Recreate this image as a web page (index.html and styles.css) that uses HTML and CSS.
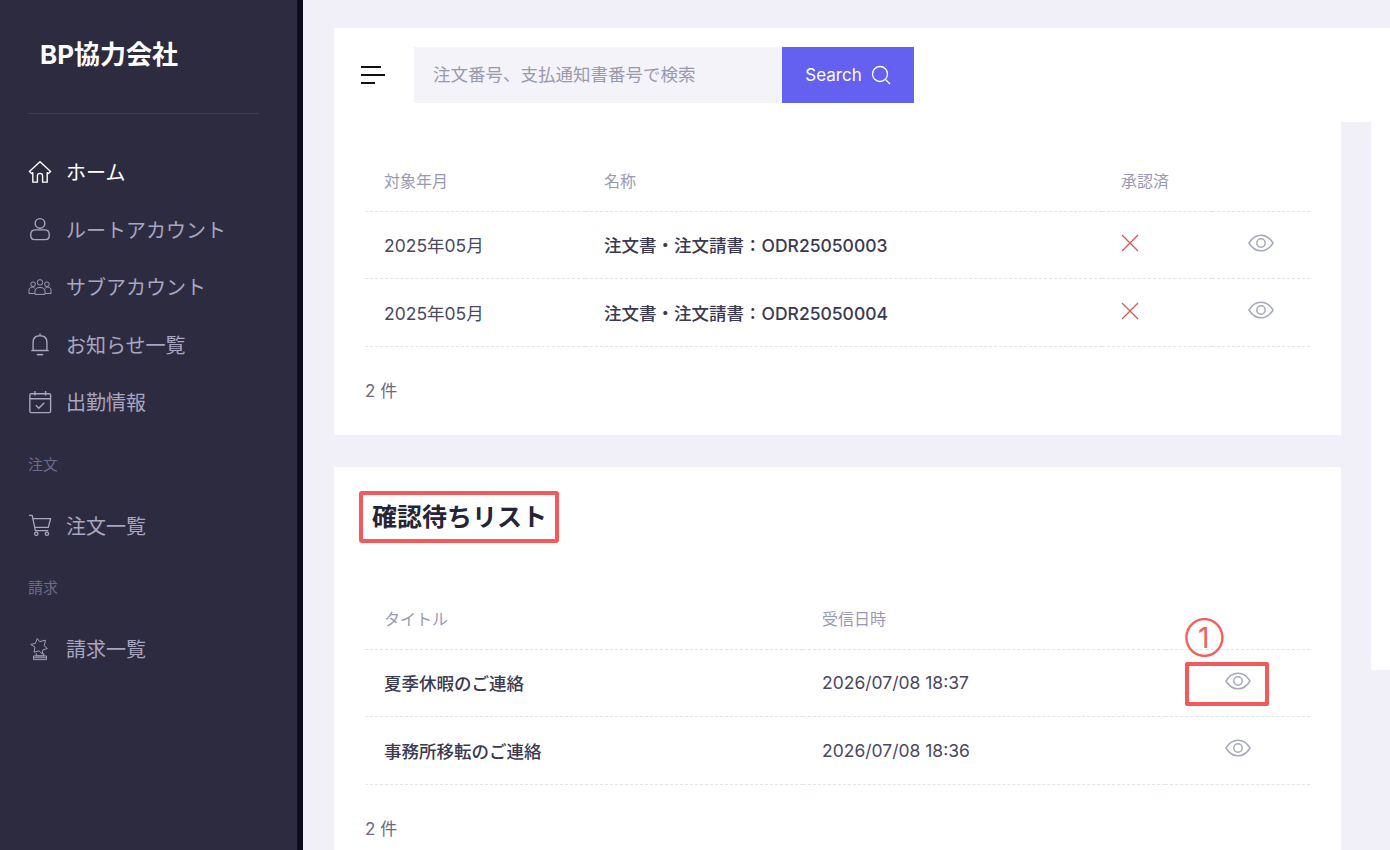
FILE: index.html
```html
<!DOCTYPE html>
<html lang="ja">
<head>
    <meta charset="UTF-8">
    <title>BP協力会社</title>
    <link rel="stylesheet" href="styles.css">
</head>
<body>
<svg class="defs" width="0" height="0">
    <symbol id="i-eye" viewBox="0 0 26 18">
        <path d="M1 9C4 4 8 1.2 13 1.2S22 4 25 9c-3 5-7 7.800-12 7.800S4 14 1 9z" fill="none" stroke="currentColor" stroke-width="1.500"/>
        <circle cx="13" cy="9" r="4.200" fill="none" stroke="currentColor" stroke-width="1.500"/>
    </symbol>
    <symbol id="i-x" viewBox="0 0 18 18">
        <path d="M1 1l16 16M17 1L1 17" fill="none" stroke="currentColor" stroke-width="1.200"/>
    </symbol>
</svg>

<aside class="sidebar">
    <div class="logo">BP協力会社</div>
    <nav class="nav">
        <a class="nav-item active">
            <svg class="nav-icon" viewBox="0 0 26 26"><path d="M1.500 12.500L13 2l11.500 10.500-2.500 2.200-1.200-1V24h-5v-7q0-2.500-2.800-2.500T10.200 17v7h-5V13.700l-1.200 1z" fill="none" stroke="currentColor" stroke-width="1.500" stroke-linejoin="round"/></svg>
            ホーム
        </a>
        <a class="nav-item">
            <svg class="nav-icon" viewBox="0 0 26 26"><circle cx="13" cy="7" r="5.200" fill="none" stroke="currentColor" stroke-width="1.500"/><path d="M8 14h10q5 0 5 5v1q0 4.500-4.500 4.500h-11Q3 24.500 3 20v-1q0-5 5-5z" fill="none" stroke="currentColor" stroke-width="1.500"/></svg>
            ルートアカウント
        </a>
        <a class="nav-item">
            <svg class="nav-icon" viewBox="0 0 26 26" fill="none" stroke="currentColor" stroke-width="1"><circle cx="13" cy="8" r="3"/><circle cx="5.500" cy="10" r="2.500"/><circle cx="20.500" cy="10" r="2.500"/><path d="M7.500 21v-2.500q0-5 5.500-5t5.500 5V21z"/><path d="M7.500 14.500q-1.500-1.500-3-1.500Q1 13 1 17.500V20h6.500M18.500 14.500q1.500-1.500 3-1.500 3.500 0 3.500 4.500V20h-6.500"/></svg>
            サブアカウント
        </a>
        <a class="nav-item">
            <svg class="nav-icon" viewBox="0 0 26 26" fill="none" stroke="currentColor" stroke-width="1.500"><path d="M13 1.500v2.300M5.500 20v-9q0-7 7.500-7t7.500 7v9zM3.500 20.200h19"/><path d="M9.500 24.500h7" stroke-width="1.800"/></svg>
            お知らせ一覧
        </a>
        <a class="nav-item">
            <svg class="nav-icon" viewBox="0 0 26 26" fill="none" stroke="currentColor" stroke-width="1.500"><rect x="2" y="4" width="22.500" height="20.500" rx="1.500"/><path d="M2 9.500h22.500M7.500 1v5M19 1v5"/><path d="M8.500 16.500l3.200 3.200 6-6"/></svg>
            出勤情報
        </a>
        <div class="nav-label">注文</div>
        <a class="nav-item">
            <svg class="nav-icon" viewBox="0 0 26 26" fill="none" stroke="currentColor" stroke-width="1.400"><path d="M1 2.500h3.500L8 19h14"/><path d="M5.300 6h19.200l-2.500 9.500H7.300"/><circle cx="9" cy="22.500" r="1.800"/><circle cx="20.500" cy="22.500" r="1.800"/></svg>
            注文一覧
        </a>
        <div class="nav-label">請求</div>
        <a class="nav-item">
            <svg class="nav-icon" viewBox="0 0 26 26" fill="none" stroke="currentColor" stroke-width="1"><path d="M10 1.500l2.500 3.500 6.500-1.500-1.500 6 3.500 3-5 1.500-.5 4.500-3.500-3.500-5.500 1.500 1-5.500L3 8l5-1z"/><path d="M8 20.500h10M9 20.500v-3M17 20.500v-3M6 24.500h14v-4H6zM6 22.500h14"/></svg>
            請求一覧
        </a>
    </nav>
</aside>

<div class="main">
    <header class="topbar">
        <div class="burger"><span class="b1"></span><span class="b2"></span><span class="b3"></span></div>
        <div class="search">
            <div class="search-input">注文番号、支払通知書番号で検索</div>
            <div class="search-btn">Search
                <svg class="search-icon" viewBox="0 0 20 20" fill="none" stroke="currentColor" stroke-width="1.300"><circle cx="9" cy="9" r="7.500"/><path d="M14.500 14.500l4.500 4.500"/></svg>
            </div>
        </div>
    </header>

    <div class="content">
        <div class="cards">
            <section class="card card-first">
                <table class="list list-orders">
                    <thead>
                        <tr><th class="c-month">対象年月</th><th class="c-name">名称</th><th class="c-ok">承認済</th><th></th></tr>
                    </thead>
                    <tbody>
                        <tr>
                            <td>2025年05月</td>
                            <td class="strong">注文書・注文請書：ODR25050003</td>
                            <td><svg class="ico-x"><use href="#i-x"/></svg></td>
                            <td class="eye-cell"><svg class="ico-eye"><use href="#i-eye"/></svg></td>
                        </tr>
                        <tr>
                            <td>2025年05月</td>
                            <td class="strong">注文書・注文請書：ODR25050004</td>
                            <td><svg class="ico-x"><use href="#i-x"/></svg></td>
                            <td class="eye-cell"><svg class="ico-eye"><use href="#i-eye"/></svg></td>
                        </tr>
                    </tbody>
                </table>
                <p class="count">2 件</p>
            </section>

            <section class="card card-second">
                <h2 class="card-title">確認待ちリスト</h2>
                <table class="list list-notice">
                    <thead>
                        <tr><th class="c-title">タイトル</th><th class="c-date">受信日時</th><th></th></tr>
                    </thead>
                    <tbody>
                        <tr>
                            <td class="strong">夏季休暇のご連絡</td>
                            <td>2026/07/08 18:37</td>
                            <td class="eye-cell marked">
                                <svg class="ico-eye"><use href="#i-eye"/></svg>
                                <span class="mark-box"></span>
                                <span class="mark-num">①</span>
                            </td>
                        </tr>
                        <tr>
                            <td class="strong">事務所移転のご連絡</td>
                            <td>2026/07/08 18:36</td>
                            <td class="eye-cell"><svg class="ico-eye"><use href="#i-eye"/></svg></td>
                        </tr>
                    </tbody>
                </table>
                <p class="count">2 件</p>
            </section>
        </div>
        <div class="side-panel"></div>
    </div>
</div>
</body>
</html>
```

FILE: styles.css
```css
* {
    box-sizing: border-box;
}

html, body {
    height: 850px;
    margin: 0;
    overflow: hidden;
}

body {
    display: flex;
    background-color: #f1f0f9;
    font-family: "Inter", "Noto Sans CJK JP", sans-serif;
    color: #3b3950;
}

.defs {
    position: absolute;
}

/* sidebar */
.sidebar {
    width: 303px;
    flex: none;
    height: 850px;
    background-color: #2d2b3f;
    border-right: 6px solid #0d0b1e;
    padding: 0 38px 0 28px;
}

.logo {
    height: 114px;
    padding: 37px 0 0 12px;
    border-bottom: 1px solid #3f3d52;
    font-size: 26px;
    line-height: 36px;
    font-weight: 700;
    color: #fff;
}

.nav {
    padding-top: 29px;
}

.nav-item {
    display: flex;
    align-items: center;
    gap: 14px;
    height: 57.5px;
    font-size: 20px;
    color: #a8a6c0;
}

.nav-item.active {
    color: #fff;
}

.nav-icon {
    width: 24px;
    height: 24px;
    flex: none;
}

.nav-label {
    height: 66px;
    padding-top: 23px;
    font-size: 15px;
    line-height: 22px;
    color: #6c6a8e;
}

/* top bar */
.main {
    flex: 1;
    min-width: 0;
    padding: 28px 0 0 31px;
}

.topbar {
    display: flex;
    align-items: flex-start;
    height: 94px;
    padding: 19px 0 0 27px;
    background-color: #fff;
}

.burger {
    display: flex;
    flex-direction: column;
    gap: 6px;
    width: 25px;
    margin: 19px 28px 0 0;
}

.burger span {
    display: block;
    height: 2px;
    background-color: #111;
}

.b1 {
    width: 20px;
}

.b2 {
    width: 24px;
}

.b3 {
    width: 14px;
}

.search {
    display: flex;
    height: 56px;
}

.search-input {
    width: 368px;
    padding-left: 19px;
    background-color: #f3f3f9;
    font-size: 17.5px;
    line-height: 56px;
    color: #9a99ab;
}

.search-btn {
    display: flex;
    align-items: center;
    justify-content: center;
    gap: 9px;
    width: 132px;
    background-color: #6460f0;
    color: #fff;
    font-size: 17px;
}

.search-icon {
    width: 20px;
    height: 20px;
}

/* cards */
.content {
    display: flex;
    gap: 30px;
    align-items: flex-start;
}

.cards {
    width: 1007px;
    flex: none;
}

.side-panel {
    flex: 1;
    height: 548px;
    background-color: #fff;
}

.card {
    padding: 0 31px;
    background-color: #fff;
}

.card-first {
    height: 313px;
    padding-top: 27px;
    margin-bottom: 32px;
}

.card-second {
    height: 420px;
    padding-top: 24px;
}

.card-title {
    display: inline-block;
    margin: 0 0 44px -6px;
    padding: 0 8px 0 9px;
    height: 52px;
    border: 4px solid #f55a5a;
    border-radius: 3px;
    font-size: 25px;
    line-height: 44px;
    font-weight: 700;
    color: #262538;
}

.list {
    width: 945px;
    border-collapse: collapse;
    table-layout: fixed;
}

.list th {
    height: 62px;
    padding: 0 0 0 19px;
    text-align: left;
    font-size: 16px;
    font-weight: 400;
    color: #9a99b3;
    border-bottom: 1px dashed #dfe6e6;
}

.list td {
    height: 67.5px;
    padding: 0 0 0 19px;
    font-size: 17.5px;
    color: #4a4860;
    border-bottom: 1px dashed #dfe6e6;
}

.list td.strong {
    font-weight: 500;
    color: #3b3950;
}

.c-month {
    width: 220px;
}

.c-name {
    width: 517px;
}

.c-ok {
    width: 110px;
}

.c-title {
    width: 438px;
}

.c-date {
    width: 362px;
}

.list td.eye-cell {
    padding: 0;
    text-align: center;
    position: relative;
}

.ico-eye {
    display: block;
    width: 26px;
    height: 18px;
    margin: -4px auto 0;
    color: #a5a9b8;
}

.ico-x {
    display: block;
    width: 18px;
    height: 18px;
    margin-top: -3px;
    color: #d9534f;
}

.count {
    margin: 32px 0 0;
    font-size: 17px;
    line-height: 24px;
    color: #6b6a80;
}

/* annotation over the table */
.mark-box {
    position: absolute;
    left: 20px;
    top: 12px;
    width: 84px;
    height: 44px;
    border: 4px solid #f55a5a;
    border-radius: 2px;
}

.mark-num {
    position: absolute;
    left: 20px;
    top: -30px;
    font-size: 28px;
    line-height: 36px;
    color: #f0605c;
}
```
